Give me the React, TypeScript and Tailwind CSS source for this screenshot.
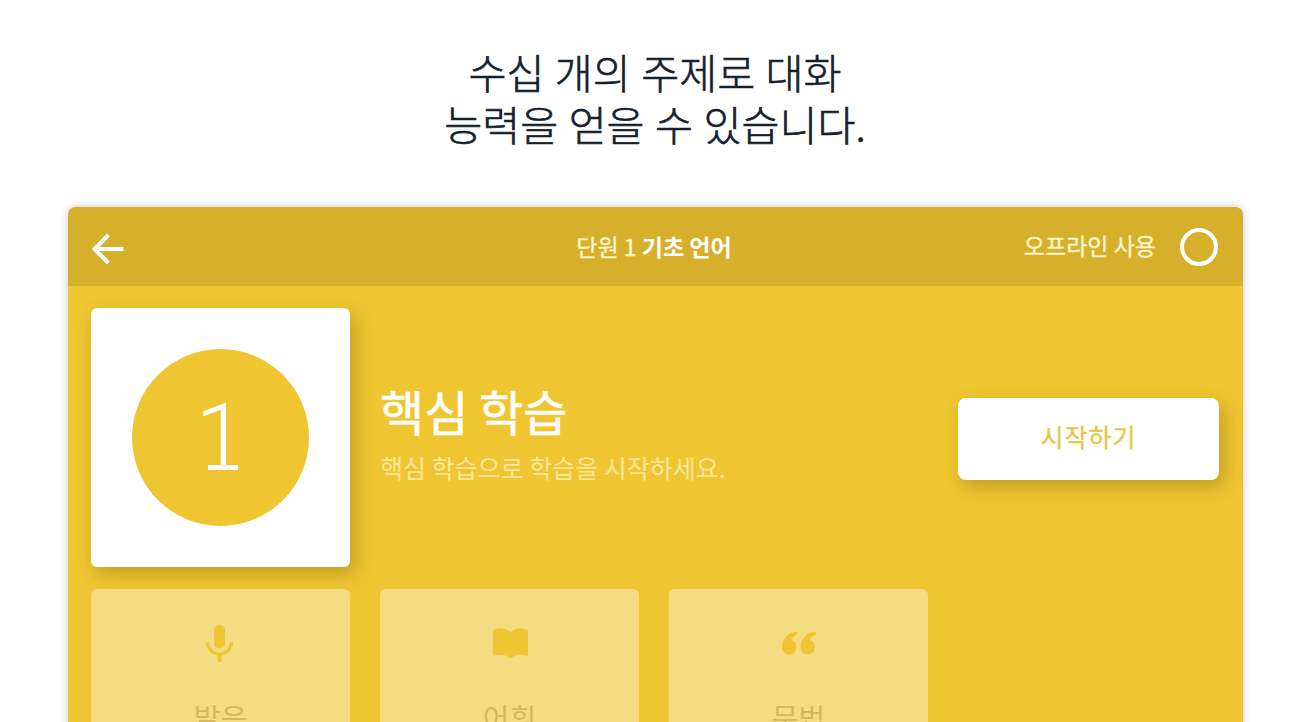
import { FC, ReactNode } from 'react';

interface LessonTileProps {
  label: string;
  icon: ReactNode;
}

const MicIcon = () => (
  <svg viewBox="0 0 27 37" className="w-[27px] h-[37px] mr-[2px]" fill="currentColor">
    <rect x="8" y="0" width="11" height="23.5" rx="5.5" />
    <path d="M1.5 17.5a12 11.4 0 0 0 24 0" fill="none" stroke="currentColor" strokeWidth="3" />
    <rect x="11.7" y="29" width="3.8" height="8" />
  </svg>
);

const BookIcon = () => (
  <svg viewBox="0 0 35 31" className="w-[35px] h-[31px] ml-[2px]" fill="currentColor">
    <path d="M0 2C6-.6 13-.4 17.500 4.500 22-.4 29-.6 35 2V28c-6-2-13-1.500-17.500 2.500C13 26.500 6 26 0 28Z" />
  </svg>
);

const QuoteIcon = () => (
  <svg viewBox="0 0 34 24" className="w-[34px] h-[24px]" fill="currentColor">
    <path d="M15.300.5C7 .7 0 8 0 15.500 0 20.300 3 23.500 7.300 23.500c4.200 0 7.200-3.200 7.200-7.400 0-3.500-2-6.300-5-7.200.8-2.800 3-5 5.800-5.500Z" />
    <path d="M33.800.5C25.500.7 18.500 8 18.500 15.500c0 4.800 3 8 7.300 8 4.200 0 7.200-3.200 7.200-7.400 0-3.500-2-6.300-5-7.200.8-2.800 3-5 5.800-5.500Z" />
  </svg>
);

const LessonTile: FC<LessonTileProps> = ({ label, icon }) => {
  return (
    <div className="w-[259px] h-[259px] rounded-md bg-[#f5dc83] flex flex-col items-center">
      <div className="h-[108px] flex items-center justify-center text-[#efc631]">{icon}</div>
      <span className="text-[29px] leading-[40px] text-[#d5b95c]">{label}</span>
    </div>
  );
};

const App: FC = () => {
  return (
    <div className="h-[722px] overflow-hidden bg-white font-['Noto_Sans_CJK_KR',sans-serif] whitespace-nowrap">
      <h1 className="h-[207px] pt-[45px] text-center text-[41.3px] leading-[52px] font-light text-[#14202e] [word-spacing:1.3px] [-webkit-text-stroke:0.6px]">
        수십 개의 주제로 대화
        <br />
        능력을 얻을 수 있습니다.
      </h1>

      <main className="ml-[68px] w-[1175px] h-[640px] rounded-t-lg bg-[#efc631] shadow-[0_0_8px_rgba(0,0,0,0.22)]">
        <header className="h-[79px] rounded-t-lg bg-[#d6b02b] text-white grid grid-cols-3 items-center px-6">
          <svg viewBox="0 0 32 32" className="w-8 h-8 mt-1" fill="none" stroke="currentColor" strokeWidth="4">
            <path d="M16.500 2 2.500 16l14 14M2.500 16h29" />
          </svg>
          <div className="-ml-[3px] -mt-px text-center text-[23px] leading-8">
            <span className="text-[#fff6cf] [-webkit-text-stroke:0.3px]">단원 1</span>{' '}
            <span className="font-bold">기초 언어</span>
          </div>
          <div className="flex items-center justify-end gap-6">
            <span className="-mt-[3px] text-[23px] leading-8 text-[#fff6cf] [-webkit-text-stroke:0.3px]">오프라인 사용</span>
            <span className="w-[38px] h-[38px] mr-px rounded-full border-4 border-white" />
          </div>
        </header>

        <section className="flex items-center pt-[22px] pl-[23px] pr-6">
          <div className="w-[259px] h-[259px] rounded-md bg-white flex items-center justify-center shadow-[5px_7px_18px_rgba(90,65,0,0.3)]">
            <div className="w-[177px] h-[177px] rounded-full bg-[#efc631] text-white flex items-center justify-center">
              <span className="relative font-[Roboto,sans-serif] text-[90px] leading-none font-light">
                1
                <span className="absolute left-[12px] bottom-[13px] w-[30px] h-[5px] bg-white" />
              </span>
            </div>
          </div>
          <div className="ml-[30px]">
            <h2 className="-mt-[4px] text-[48px] leading-[60px] text-white [-webkit-text-stroke:0.6px]">핵심 학습</h2>
            <p className="mt-[2px] text-[25px] leading-[50px] text-[#fae799]">핵심 학습으로 학습을 시작하세요.</p>
          </div>
          <button className="ml-auto mt-[2px] pb-[4px] w-[261px] h-[82px] rounded-lg bg-white text-[25px] tracking-[1px] text-[#eac544] [-webkit-text-stroke:0.3px] shadow-[5px_7px_18px_rgba(90,65,0,0.3)]">
            시작하기
          </button>
        </section>

        <section className="flex gap-[30px] pt-[22px] pl-[23px]">
          <LessonTile label="발음" icon={<MicIcon />} />
          <LessonTile label="어휘" icon={<BookIcon />} />
          <LessonTile label="문법" icon={<QuoteIcon />} />
        </section>
      </main>
    </div>
  );
};

export default App;
